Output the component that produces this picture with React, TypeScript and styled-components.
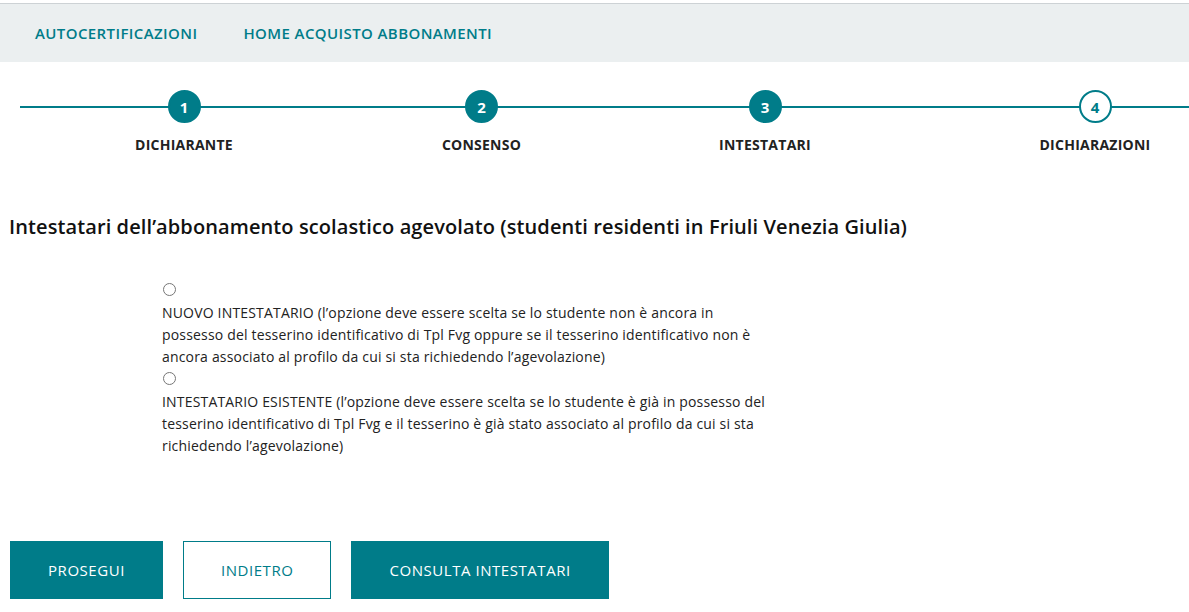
import * as React from 'react';
import styled, {createGlobalStyle} from "styled-components";

const teal = '#007c89';
const font = `"Open Sans", Lato, sans-serif`;

const GlobalStyle = createGlobalStyle`
    html, body {
        margin: 0;
        padding: 0;
        background: #fff;
        font-family: ${font};
        color: #1c1c1c;
        overflow: hidden;
    }
    * { box-sizing: border-box; }
`;

const Page = styled.div`
    width: 1189px;
    min-height: 612px;
    padding-top: 3px;
    overflow: hidden;
`;

const TopBar = styled.nav`
    display: flex;
    align-items: center;
    gap: 46px;
    height: 59px;
    padding: 0 35px;
    background: #ebeff0;
    border-top: 1px solid #cdd2d5;
`;

const NavLink = styled.a`
    color: ${teal};
    font-size: 15px;
    font-weight: 600;
    letter-spacing: 0.4px;
    text-decoration: none;
    text-transform: uppercase;
`;

const Stepper = styled.div`
    position: relative;
    display: flex;
    margin: 28px 0 0 20px;
    height: 70px;
`;

const StepLine = styled.div`
    position: absolute;
    left: 0;
    right: 0;
    top: 16px;
    height: 2px;
    background: ${teal};
`;

const Step = styled.div<{ $w: number }>`
    position: relative;
    flex: 0 0 ${p => p.$w}px;
    display: flex;
    flex-direction: column;
    align-items: center;
`;

const Circle = styled.div<{ $done: boolean }>`
    width: 33px;
    height: 33px;
    border-radius: 50%;
    display: flex;
    align-items: center;
    justify-content: center;
    font-size: 15px;
    font-weight: 700;
    background: ${p => p.$done ? teal : '#fff'};
    color: ${p => p.$done ? '#fff' : teal};
    border: 2px solid ${teal};
`;

const StepLabel = styled.div`
    margin-top: 12px;
    font-size: 14px;
    font-weight: 700;
    color: #222;
    letter-spacing: 0.25px;
    white-space: nowrap;
`;

const Title = styled.h1`
    margin: 53px 0 0 9px;
    font-size: 20px;
    font-weight: 600;
    color: #111;
    letter-spacing: 0.1px;
`;

const Options = styled.div`
    margin: 43px 0 0 162px;
    width: 612px;
`;

const Option = styled.label`
    display: block;
    font-size: 14px;
    line-height: 22px;
    letter-spacing: 0.18px;
    color: #222;
`;

const Radio = styled.input`
    display: block;
    width: 13px;
    height: 13px;
    margin: 4px 0 6px 1px;
    accent-color: ${teal};
`;

const Actions = styled.div`
    display: flex;
    gap: 20px;
    margin: 84px 0 0 10px;
`;

const Button = styled.button<{ $outline?: boolean }>`
    height: 58px;
    padding: 0 37px;
    font-family: ${font};
    font-size: 15px;
    letter-spacing: 0.55px;
    text-transform: uppercase;
    cursor: pointer;
    background: ${p => p.$outline ? '#fff' : teal};
    color: ${p => p.$outline ? teal : '#fff'};
    border: 1px solid ${teal};
`;

const steps = [
    {n: 1, label: 'Dichiarante', w: 328, done: true},
    {n: 2, label: 'Consenso', w: 267, done: true},
    {n: 3, label: 'Intestatari', w: 300, done: true},
    {n: 4, label: 'Dichiarazioni', w: 360, done: false},
];

const App = () => {
    const [choice, setChoice] = React.useState('');

    return (
        <Page>
            <GlobalStyle/>
            <TopBar>
                <NavLink href="#">Autocertificazioni</NavLink>
                <NavLink href="#">Home acquisto abbonamenti</NavLink>
            </TopBar>
            <Stepper>
                <StepLine/>
                {steps.map(s => (
                    <Step key={s.n} $w={s.w}>
                        <Circle $done={s.done}>{s.n}</Circle>
                        <StepLabel>{s.label.toUpperCase()}</StepLabel>
                    </Step>
                ))}
            </Stepper>
            <Title>Intestatari dell’abbonamento scolastico agevolato (studenti residenti in Friuli Venezia Giulia)</Title>
            <Options>
                <Option>
                    <Radio type="radio" name="intestatario" checked={choice === 'nuovo'} onChange={() => setChoice('nuovo')}/>
                    NUOVO INTESTATARIO (l’opzione deve essere scelta se lo studente non è ancora in possesso del tesserino identificativo di Tpl Fvg oppure se il tesserino identificativo non è ancora associato al profilo da cui si sta richiedendo l’agevolazione)
                </Option>
                <Option>
                    <Radio type="radio" name="intestatario" checked={choice === 'esistente'} onChange={() => setChoice('esistente')}/>
                    INTESTATARIO ESISTENTE (l’opzione deve essere scelta se lo studente è già in possesso del tesserino identificativo di Tpl Fvg e il tesserino è già stato associato al profilo da cui si sta richiedendo l’agevolazione)
                </Option>
            </Options>
            <Actions>
                <Button>Prosegui</Button>
                <Button $outline>Indietro</Button>
                <Button>Consulta intestatari</Button>
            </Actions>
        </Page>
    );
};

export default App;
